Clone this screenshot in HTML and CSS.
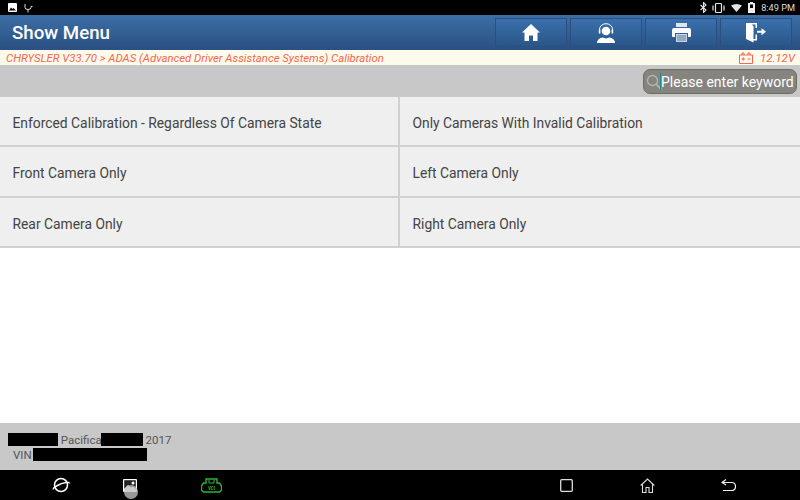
FILE: index.html
```html
<!DOCTYPE html>
<html lang="en">
<head>
    <meta charset="UTF-8">
    <title>Show Menu</title>
    <link rel="stylesheet" href="styles.css">
</head>
<body>
    <div class="screen">
        <div class="status-bar">
            <div class="status-left">
                <svg width="9" height="9" viewBox="0 0 9 9"><rect width="9" height="9" rx="1" fill="#fff"/><path d="M1 7.500l2-3 1.500 1.500 1-1 2.500 2.500z" fill="#000"/></svg>
                <svg width="9" height="10" viewBox="0 0 9 10"><path d="M1 1v3.500q0 2 3 2t3-2v-1M4 6.500v3M7 3.500h1.500" fill="none" stroke="#ddd" stroke-width="1"/></svg>
            </div>
            <div class="status-right">
                <svg width="7" height="11" viewBox="0 0 7 11"><path d="M.5 3l5.500 5-2.500 2.500v-10l2.500 2.500-5.500 5" fill="none" stroke="#e4e4e4" stroke-width="1.100"/></svg>
                <svg class="ml-vib" width="13" height="10" viewBox="0 0 13 10"><rect x="3.500" y=".5" width="6" height="9" rx="1" fill="none" stroke="#e4e4e4" stroke-width="1.200"/><path d="M1 2.500v5M12 2.500v5" stroke="#e4e4e4" stroke-width="1.200"/></svg>
                <svg class="ml-wifi" width="11" height="8" viewBox="0 0 11 8"><path d="M0 1.500q5.500-3 11 0l-5.500 6.500z" fill="#e4e4e4"/></svg>
                <svg class="ml-batt" width="7" height="11" viewBox="0 0 7 11"><path d="M2 0h3v1h2v10h-7v-10h2z" fill="#eee"/><rect x="2" y="2.500" width="3" height="3.500" fill="#000"/></svg>
                <span class="clock">8:49 PM</span>
            </div>
        </div>

        <div class="header">
            <h1>Show Menu</h1>
            <div class="toolbar">
                <button class="tool-btn">
                    <svg width="18" height="17" viewBox="0 0 18 17"><path d="M9 0l9 8.500h-2.500v8.500h-4.500v-5.500h-4v5.500h-4.500v-8.500h-2.500z" fill="#fff"/></svg>
                </button>
                <button class="tool-btn">
                    <svg width="20" height="20" viewBox="0 0 20 20"><circle cx="10" cy="8" r="4.300" fill="#fff"/><path d="M3.500 9.500v-3a6.500 5.800 0 0 1 13 0v3" fill="none" stroke="#fff" stroke-width="1"/><rect x="2.800" y="6.500" width="1.600" height="4" fill="#fff"/><rect x="15.600" y="6.500" width="1.600" height="4" fill="#fff"/><path d="M1 20q0-4.500 5.500-5.500l3.500 1 3.500-1q5.500 1 5.500 5.500z" fill="#fff"/></svg>
                </button>
                <button class="tool-btn">
                    <svg width="19" height="19" viewBox="0 0 19 19"><path d="M4 0h11v4h-11z" fill="#dfe6ee"/><path d="M2 5h15q2 0 2 2v6q0 1-1 1h-2v-4h-13v4h-2q-1 0-1-1v-6q0-2 2-2z" fill="#fff"/><path d="M4 11h11v8h-11z" fill="#c9d5e2"/><path d="M5 13h9M5 15h9M5 17h9" stroke="#5b7fa6" stroke-width="1"/></svg>
                </button>
                <button class="tool-btn">
                    <svg width="20" height="20" viewBox="0 0 20 20"><path d="M0 0h11v5h-1.500v-3.500h-4l2 1.500v13h2v-4.500h1.500v6h-3.500v2l-7.500-3.500z" fill="#fff"/><path d="M11 7.700h4.500v-2.500l4.500 3.500-4.500 3.500v-2.500h-4.500z" fill="#fff"/></svg>
                </button>
            </div>
        </div>

        <div class="crumb">
            <span>CHRYSLER V33.70 &gt; ADAS (Advanced Driver Assistance Systems) Calibration</span>
            <span class="voltage">
                <svg width="14" height="12" viewBox="0 0 14 12"><path d="M.5 3h13v8.500h-13zM3 3v-2h2v2M9 3v-2h2v2M2.500 7h3.500M4.200 5.300v3.400M8.500 7h3" fill="none" stroke="#f4664f" stroke-width="1"/></svg>
                12.12V
            </span>
        </div>

        <div class="search-row">
            <div class="search-box">
                <svg width="16" height="16" viewBox="0 0 16 16"><circle cx="6.500" cy="6.500" r="5" fill="none" stroke="#b5b5b0" stroke-width="1.300"/><path d="M10.300 10.300l5 5" stroke="#b5b5b0" stroke-width="1.800"/></svg>
                <i class="caret"></i>
                <span>Please enter keyword</span>
            </div>
        </div>

        <div class="menu">
            <div class="menu-item">Enforced Calibration - Regardless Of Camera State</div>
            <div class="menu-item">Only Cameras With Invalid Calibration</div>
            <div class="menu-item">Front Camera Only</div>
            <div class="menu-item">Left Camera Only</div>
            <div class="menu-item">Rear Camera Only</div>
            <div class="menu-item">Right Camera Only</div>
        </div>

        <div class="content"></div>

        <div class="vehicle">
            <div class="vehicle-line"><span class="mask w50"></span> Pacifica<span class="mask w42"></span> 2017</div>
            <div class="vehicle-line vin">VIN <span class="mask w114"></span></div>
        </div>

        <div class="nav-bar">
            <div class="nav-left">
                <svg class="nav-a" width="18" height="16" viewBox="0 0 18 16"><circle cx="9" cy="8" r="6.500" fill="none" stroke="#fff" stroke-width="1.500"/><path d="M1.500 12.500q-1-1.500 3-3.500 5-3 9.500-3.500 3.500-.5 3 1" fill="none" stroke="#fff" stroke-width="1.500"/></svg>
                <div class="nav-b">
                    <svg width="14" height="13" viewBox="0 0 14 13"><rect width="14" height="13" rx="1" fill="#fff"/><rect x="1.200" y="1.200" width="11.600" height="9" fill="#222"/><circle cx="10" cy="4" r="1.500" fill="#fff"/><path d="M1 10l4-4 3 2.500 2-1 3 2.500v3h-12z" fill="#fff"/></svg>
                    <i class="touch-dot"></i>
                </div>
                <svg class="nav-c" width="21" height="15" viewBox="0 0 21 15"><path d="M5 1h11v4h2.500l2 3v4l-2 2h-16l-2-2v-4l2-3h2.500z" fill="none" stroke="#2fb52f" stroke-width="1.400"/><path d="M8 2v3h5v-3" fill="none" stroke="#2fb52f"/><text x="10.500" y="11.500" class="vci">VCI</text></svg>
            </div>
            <div class="nav-right">
                <svg width="13" height="13" viewBox="0 0 13 13"><rect x=".7" y=".7" width="11.600" height="11.600" rx="1" fill="none" stroke="#ddd" stroke-width="1.300"/></svg>
                <svg width="15" height="15" viewBox="0 0 15 15"><path d="M.7 7.500l6.800-6.500 6.800 6.500M2.500 6.500v8h3.500v-5h3v5h3.500v-8" fill="none" stroke="#ddd" stroke-width="1.100"/></svg>
                <svg width="15" height="13" viewBox="0 0 15 13"><path d="M1 3.500h9.500q4 0 4 4t-4 4h-8.500M5 .5l-4 3 4 2.500" fill="none" stroke="#eee" stroke-width="1.200"/></svg>
            </div>
        </div>
    </div>
</body>
</html>
```

FILE: styles.css
```css
* {
    box-sizing: border-box;
}

html, body {
    margin: 0;
    height: 100%;
    overflow: hidden;
}

body {
    font-family: 'Roboto', sans-serif;
    background-color: #fff;
    color: #444;
}

.screen {
    width: 800px;
    height: 500px;
    display: flex;
    flex-direction: column;
}

.status-bar {
    height: 15px;
    background-color: #000;
    display: flex;
    justify-content: space-between;
    align-items: center;
    padding: 0 5px 0 8px;
}

.status-left, .status-right {
    display: flex;
    align-items: center;
}

.status-left {
    gap: 7px;
}

.ml-vib {
    margin-left: 5px;
}

.ml-wifi {
    margin-left: 6px;
}

.ml-batt {
    margin-left: 6px;
}

.clock {
    color: #ddd;
    font-size: 9.200px;
    margin-left: 6px;
}

.header {
    height: 35px;
    background: linear-gradient(#3c6ea6, #2a5080);
    display: flex;
    justify-content: space-between;
    align-items: center;
    padding: 0 8px 0 12px;
}

h1 {
    margin: 0;
    color: #fff;
    font-size: 18.700px;
    font-weight: 500;
}

.toolbar {
    display: flex;
    gap: 3px;
}

.tool-btn {
    width: 72px;
    height: 29px;
    padding: 0;
    border: 1px solid #2b4f7e;
    background: linear-gradient(#3a70ad, #295689);
    display: flex;
    align-items: center;
    justify-content: center;
}

.crumb {
    height: 15px;
    background-color: #fffbec;
    color: #f4664f;
    font-size: 11.350px;
    font-style: italic;
    display: flex;
    justify-content: space-between;
    align-items: center;
    padding: 0 5px 0 6px;
}

.voltage {
    display: flex;
    align-items: center;
    font-size: 11.500px;
    gap: 7px;
}

.search-row {
    height: 32px;
    background-color: #c8c8c8;
    display: flex;
    justify-content: flex-end;
    align-items: flex-start;
    padding: 4px 3px 0 0;
}

.search-box {
    width: 154px;
    height: 25px;
    border: 1px solid #6d6d68;
    border-radius: 7px;
    background-color: #86847e;
    color: #fff;
    font-size: 14px;
    display: flex;
    align-items: center;
    padding-left: 2px;
    white-space: nowrap;
}

.search-box svg {
    margin-right: -2px;
}

.caret {
    width: 1px;
    height: 17px;
    background-color: #1f8f86;
}

.menu {
    display: grid;
    grid-template-columns: 400px 400px;
    grid-auto-rows: 50.300px;
}

.menu-item {
    background-color: #efefef;
    border-bottom: 2px solid #d0d0d0;
    color: #444;
    font-size: 13.850px;
    display: flex;
    align-items: center;
    padding: 4px 0 0 12.500px;
}

.menu-item:nth-child(odd) {
    border-right: 2px solid #d0d0d0;
}

.content {
    flex: 1;
    background-color: #fff;
}

.vehicle {
    height: 47px;
    background-color: #c8c8c8;
    color: #555;
    font-size: 11.500px;
    padding: 9px 0 0 8px;
}

.vehicle-line {
    height: 15px;
    display: flex;
    align-items: center;
    white-space: pre;
}

.vin {
    padding-left: 5px;
}

.mask {
    display: inline-block;
    height: 13px;
    background-color: #000;
}

.w50 {
    width: 50px;
}

.w42 {
    width: 42px;
    margin-left: -1px;
}

.w114 {
    width: 114px;
    margin-left: -2px;
}

.nav-bar {
    height: 30px;
    background-color: #000;
    display: flex;
    justify-content: space-between;
    align-items: center;
}

.nav-left {
    display: flex;
    align-items: center;
}

.nav-a {
    margin-left: 52px;
}

.nav-b {
    margin-left: 53px;
    position: relative;
    display: flex;
}

.nav-c {
    margin-left: 64px;
}

.touch-dot {
    position: absolute;
    left: 1px;
    top: 6px;
    width: 14px;
    height: 14px;
    border-radius: 50%;
    background-color: rgba(190, 190, 190, 0.8);
}

.vci {
    font-family: 'Roboto', sans-serif;
    font-size: 4.500px;
    font-weight: 700;
    fill: #2fb52f;
    text-anchor: middle;
}

.nav-right {
    display: flex;
    align-items: center;
    gap: 66px;
    padding-right: 64px;
}

.nav-right svg:first-child {
    margin-right: 1px;
}
```
